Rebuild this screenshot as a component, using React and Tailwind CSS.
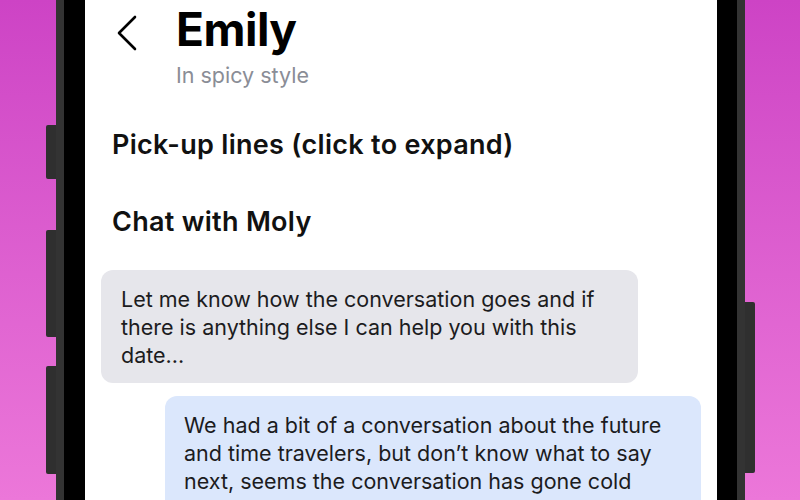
import React from 'react';

const font = { fontFamily: 'Inter, "Liberation Sans", sans-serif' };

const App = () => {
  return (
    <div
      className="relative w-[800px] h-[500px] overflow-hidden bg-gradient-to-b from-[#cd43c5] to-[#ec77d9]"
      style={font}
    >
      {/* side buttons */}
      <div className="absolute left-[46px] top-[125px] w-[10px] h-[54px] rounded-l-[2px] bg-[#2f2f2f]" />
      <div className="absolute left-[46px] top-[230px] w-[10px] h-[107px] rounded-l-[2px] bg-[#2f2f2f]" />
      <div className="absolute left-[46px] top-[366px] w-[10px] h-[108px] rounded-l-[2px] bg-[#2f2f2f]" />
      <div className="absolute left-[745px] top-[302px] w-[10px] h-[171px] rounded-r-[2px] bg-[#2f2f2f]" />

      <div className="ml-[56px] w-[689px] h-full flex px-[8px] bg-[#333333]">
        <div className="flex-1 flex pl-[21px] pr-[20px] bg-black">
          <div className="flex-1 flex flex-col bg-white">
            {/* header */}
            <div className="flex items-start pt-[6px]">
              <button className="ml-[32px] mt-[9px] w-[20px] h-[36px] flex items-center text-black">
                <svg width="20" height="36" viewBox="0 0 20 36" fill="none" stroke="currentColor" strokeWidth="2.6" strokeLinecap="round" strokeLinejoin="round">
                  <path d="M18 2 L2 18 L18 34" />
                </svg>
              </button>
              <div className="ml-[39px]">
                <h1 className="text-[46px] leading-[46px] font-bold text-black tracking-[-0.5px]">Emily</h1>
                <p className="mt-[11px] text-[21.5px] leading-[24px] text-[#8a8d96]">In spicy style</p>
              </div>
            </div>

            <div className="px-[16px]">
              <h2 className="mt-[43px] pl-[11px] text-[27px] leading-[30px] font-semibold tracking-[0.3px] text-[#111]">
                Pick-up lines (click to expand)
              </h2>
              <h2 className="mt-[47px] pl-[11px] text-[27px] leading-[30px] font-semibold tracking-[0.3px] text-[#111]">
                Chat with Moly
              </h2>

              <div className="mt-[33px] flex flex-col gap-[13px]">
                <div className="mr-[63px] rounded-[12px] bg-[#e6e6eb] pl-[20px] pr-[32px] pt-[15px] pb-[14px]">
                  <p className="text-[21.5px] leading-[28px] text-[#1c1c1e]">
                    Let me know how the conversation goes and if there is anything else I can help you with this date...
                  </p>
                </div>
                <div className="ml-[64px] rounded-[12px] bg-[#dbe7fc] pl-[19px] pr-[32px] pt-[15px] pb-[16px]">
                  <p className="text-[21.5px] leading-[28px] text-[#1c1c1e]">
                    We had a bit of a conversation about the future and time travelers, but don’t know what to say next, seems the conversation has gone cold
                  </p>
                </div>
              </div>
            </div>
          </div>
        </div>
      </div>
    </div>
  );
};

export default App;
